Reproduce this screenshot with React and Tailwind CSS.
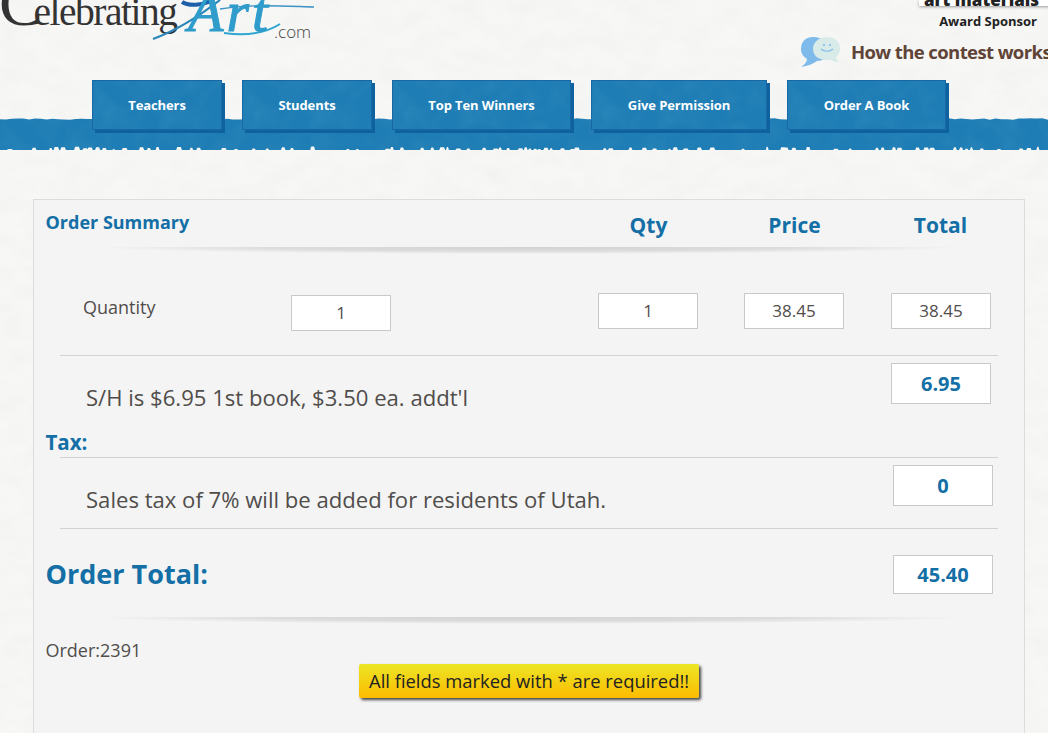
import React from "react";

function jag(seed, n, w, base, amp, top) {
  let s = seed;
  const r = () => ((s = (s * 9301 + 49297) % 233280) / 233280);
  let d = top ? `M0 0` : `M0 ${base + 8}`;
  let x = 0;
  const step = w / n;
  for (let i = 0; i <= n; i++) {
    d += ` L${x.toFixed(1)} ${(base + (r() - 0.5) * amp).toFixed(1)}`;
    x += step;
  }
  d += top ? ` L${w} 0 Z` : ` L${w} ${base + 8} Z`;
  return d;
}

function specks(seed, w) {
  let s = seed;
  const r = () => ((s = (s * 9301 + 49297) % 233280) / 233280);
  const out = [];
  let x = 8;
  while (x < w) {
    const h = 0.8 + r() * 2.6;
    const wd = 1 + r() * 3;
    out.push(`M${x.toFixed(1)} ${(32 - h).toFixed(1)} h${wd.toFixed(1)} l1 ${h.toFixed(1)} h-${(wd + 2).toFixed(1)} Z`);
    x += 4 + r() * r() * 36;
  }
  return out.join(" ");
}

function Mottle({ op = "opacity-30" }) {
  return (
    <svg className={`absolute inset-0 h-full w-full ${op}`} aria-hidden="true">
      <rect width="100%" height="100%" filter="url(#mottle)" />
    </svg>
  );
}

function NavBtn({ children, className }) {
  return (
    <a className={`relative flex h-[50px] items-center justify-center border border-[#1768a5] bg-[#1f7db5] pt-[1px] text-[13px] font-bold tracking-[-0.1px] text-white shadow-[3px_3px_0_#0f62a0] ${className}`}>
      <Mottle />
      <span className="relative">{children}</span>
    </a>
  );
}

function Heading({ children }) {
  return <div className="mt-[11px] w-[146px] text-center text-[21px] font-bold leading-[28px] text-[#136fa6]">{children}</div>;
}

function Box({ children, className }) {
  return (
    <div className={`flex w-[100px] shrink-0 items-center justify-center border border-[#c9c9c9] bg-white ${className}`}>
      {children}
    </div>
  );
}

function Fade() {
  return <div className="mx-[60px] h-[7px] bg-[radial-gradient(ellipse_50%_100%_at_50%_0%,#d2d2d2_0%,#dcdcdc_60%,#f4f4f4_100%)]" />;
}

export default function App() {
  return (
    <div className="relative h-[733px] w-[1048px] overflow-hidden bg-[#f7f7f6] font-['Open_Sans',sans-serif] text-[#504d4b]">
      <svg className="absolute inset-0 h-full w-full opacity-[0.3]" aria-hidden="true">
        <defs>
          <filter id="paper" x="0" y="0" width="100%" height="100%">
            <feTurbulence type="fractalNoise" baseFrequency="0.035 0.06" numOctaves="4" seed="7" />
            <feColorMatrix values="0 0 0 0 0.72  0 0 0 0 0.72  0 0 0 0 0.72  0.9 0 0 0 -0.3" />
          </filter>
          <filter id="mottle" x="0" y="0" width="100%" height="100%">
            <feTurbulence type="fractalNoise" baseFrequency="0.045" numOctaves="3" seed="3" />
            <feColorMatrix values="0 0 0 0 0.07  0 0 0 0 0.36  0 0 0 0 0.58  1.4 0 0 0 -0.55" />
          </filter>
        </defs>
        <rect width="100%" height="100%" filter="url(#paper)" />
      </svg>

      {/* header */}
      <header className="relative flex h-[80px] items-start justify-between">
        <div className="relative h-[44px] w-[320px] overflow-hidden">
          <div className="absolute left-[-1px] top-[-29px] flex items-baseline whitespace-nowrap font-['Liberation_Serif',serif] leading-[64px] tracking-[-1.5px] text-[#333]">
            <span className="text-[66px]">C</span>
            <span className="ml-[-8px] text-[39.5px]">elebrating</span>
          </div>
          <svg className="absolute left-[150px] top-0 h-[44px] w-[170px]" viewBox="0 0 170 44" fill="none" aria-hidden="true">
            <path d="M3 39 C28 30 52 14 70 0" stroke="#2a86b8" strokeWidth="2.2" />
            <path d="M70 9 C100 4 130 6 164 7" stroke="#3b93c4" strokeWidth="1.4" />
            <path d="M32 2 C38 6 52 6 62 0" stroke="#1c5fa8" strokeWidth="4" />
            <path d="M74 33 C96 36 116 33 130 24" stroke="#2fa6cf" strokeWidth="2" />
          </svg>
          <span className="absolute left-[188px] top-[-17px] font-['Liberation_Serif',serif] text-[58px] italic leading-[58px] tracking-[3px] text-[#2f9ccb] [-webkit-text-stroke:1px_#2f9ccb]">
            Art
          </span>
          <span className="absolute left-[274px] top-[21px] text-[17px] font-light leading-[22px] text-[#444]">.com</span>
        </div>
        <div className="flex flex-col items-end">
          <div className="mr-[-9px] h-[6px] w-[138px] overflow-hidden bg-white pl-[5px] text-[17px] font-extrabold leading-[0px] text-[#222] shadow-[0_1px_3px_#999]">
            art materials
          </div>
          <div className="mr-[11px] mt-[7px] text-[13px] font-bold leading-[17px] text-[#222]">Award Sponsor</div>
          <div className="mr-[-3px] mt-[6px] flex items-center">
            <svg width="42" height="32" viewBox="0 0 42 32" aria-hidden="true">
              <path d="M13 1 C5 1 1 6 1 13 C1 18 4 21 7 23 C7 26 4 29 1 31 C8 30 13 28 17 25 C25 25 29 19 29 12 C29 6 22 1 13 1 Z" fill="#7fbbea" />
              <path d="M27 1 C19 1 13 6 13 13 C13 20 19 24 27 24 L31 24 C33 25 36 26 39 26 C37 24 36 22 36 21 C39 19 40 16 40 12 C40 6 35 1 27 1 Z" fill="#d9ebe9" />
              <circle cx="24" cy="9" r="1.1" fill="#7fbbea" />
              <circle cx="30" cy="9" r="1.1" fill="#7fbbea" />
              <path d="M21 13 C24 16 30 16 33 13" stroke="#7fbbea" strokeWidth="1.2" fill="none" />
            </svg>
            <span className="ml-[9px] whitespace-nowrap text-[18.5px] font-bold leading-[24px] tracking-[-0.6px] text-[#5f4437]">How the contest works</span>
          </div>
        </div>
      </header>

      <nav className="relative z-10 ml-[92px] flex gap-5">
        <NavBtn className="w-[130px]">Teachers</NavBtn>
        <NavBtn className="w-[130px]">Students</NavBtn>
        <NavBtn className="w-[179px]">Top Ten Winners</NavBtn>
        <NavBtn className="w-[176px]">Give Permission</NavBtn>
        <NavBtn className="w-[159px]">Order A Book</NavBtn>
      </nav>

      <div className="relative mt-[-12px] h-[32px] bg-[#1f7db5]">
        <Mottle op="opacity-25" />
        <svg className="absolute inset-0 h-full w-full" viewBox="0 0 1048 32" preserveAspectRatio="none" aria-hidden="true">
          <path d={jag(11, 180, 1048, 1, 1.6, true)} fill="#f7f7f6" />
          <path d={specks(23, 1048)} fill="#f7f7f6" />
        </svg>
      </div>

      {/* order card */}
      <main className="relative ml-[33px] mt-[49px] h-[600px] w-[992px] border border-[#dcdcdc] bg-[#f4f4f4]">
        <div className="flex h-[47px] pl-[11.5px]">
          <div className="w-[530px] pt-[10px] text-[18px] font-bold leading-[24px] text-[#136fa6]">Order Summary</div>
          <Heading>Qty</Heading>
          <Heading>Price</Heading>
          <Heading>Total</Heading>
        </div>
        <Fade />

        <div className="mt-[39px] flex items-start pl-[49px] text-[17px]">
          <div className="w-[208px] pt-[1px] text-[18px] leading-[26px]">Quantity</div>
          <Box className="mt-[2px] h-[36px]">1</Box>
          <Box className="ml-[207px] h-[36px]">1</Box>
          <Box className="ml-[46px] h-[36px]">38.45</Box>
          <Box className="ml-[47px] h-[36px]">38.45</Box>
        </div>

        <div className="ml-[26px] mr-[26px] mt-[24px] border-t border-[#d2d2d2]" />

        <div className="ml-[52px] mt-[7px] flex items-start">
          <div className="mt-[19px] w-[805px] text-[22.1px] leading-[30px]">S/H is $6.95 1st book, $3.50 ea. addt'l</div>
          <Box className="h-[41px] text-[20px] font-bold text-[#136fa6]">6.95</Box>
        </div>

        <div className="ml-[11.5px] mt-[16px] text-[20.5px] font-bold leading-[28px] text-[#136fa6]">Tax:</div>
        <div className="ml-[26px] mr-[26px] mt-[1px] border-t border-[#d2d2d2]" />

        <div className="ml-[52px] mt-[7px] flex items-start">
          <div className="mt-[19px] w-[807px] text-[22.1px] leading-[30px]">Sales tax of 7% will be added for residents of Utah.</div>
          <Box className="h-[41px] text-[20px] font-bold text-[#136fa6]">0</Box>
        </div>

        <div className="ml-[26px] mr-[26px] mt-[14px] border-t border-[#d2d2d2]" />

        <div className="ml-[11.5px] mt-[26px] flex items-center">
          <div className="w-[847.5px] pb-[2px] text-[27px] font-bold leading-[37px] text-[#136fa6]">Order Total:</div>
          <Box className="h-[39px] text-[20px] font-bold text-[#136fa6]">45.40</Box>
        </div>

        <div className="mt-[23px]"><Fade /></div>

        <div className="ml-[11.5px] mt-[14px] text-[18px] leading-[24px]">Order:2391</div>
        <div className="ml-[325px] mt-[2px] w-fit rounded-[2px] bg-[linear-gradient(#ebe625,#fdbb00)] px-[10px] text-[18.4px] leading-[34px] text-[#222] shadow-[2px_2px_3px_#444]">
          All fields marked with * are required!!
        </div>
      </main>
    </div>
  );
}
